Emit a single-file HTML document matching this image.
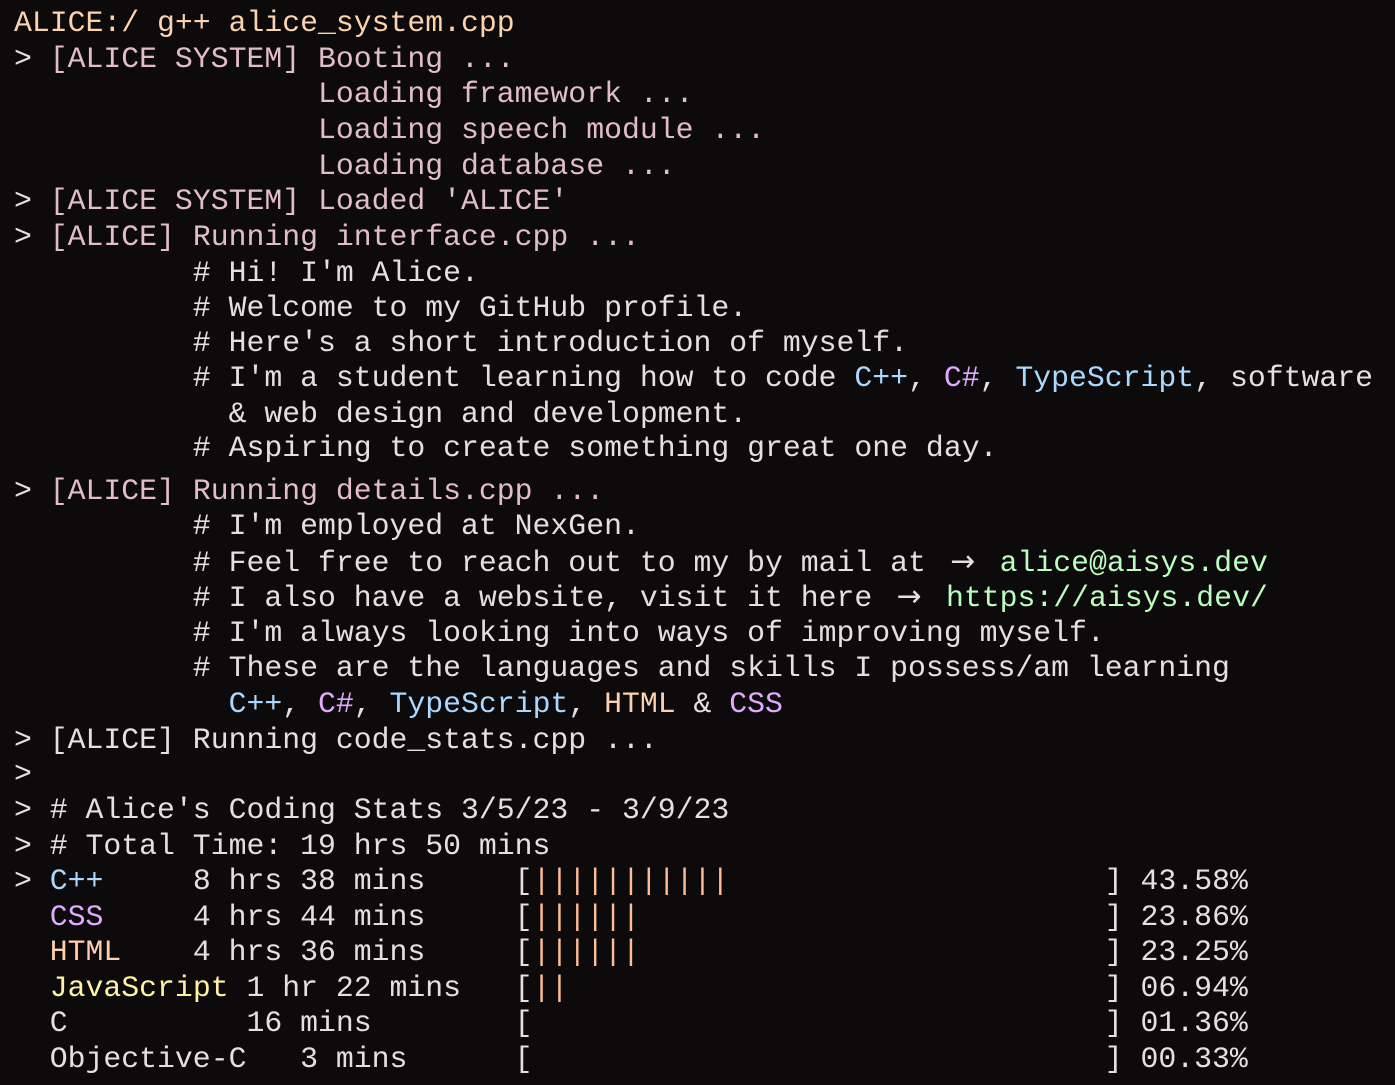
<!DOCTYPE html>
<html><head><meta charset="utf-8">
<style>
html,body{margin:0;padding:0;background:#0c0a0a;}
body{width:1395px;height:1085px;overflow:hidden;position:relative;}
.l{position:absolute;left:14px;height:36px;line-height:36px;white-space:pre;font-family:"Liberation Mono","DejaVu Sans Mono",monospace;font-size:29.8px;color:#e2e0e0;}
.pe{color:#fdd3ae}.pk{color:#e3bccb}.b{color:#a9d9ff}.pu{color:#e3a9ff}.g{color:#baffbd}.y{color:#fff2a2}.o{color:#ffbd95}.h{color:#ffcfae}
.ar{display:inline-block;width:2ch;text-align:center;font-family:"DejaVu Sans",sans-serif;}
</style></head><body>
<div class="l pe" style="top:5px">ALICE:/ g++ alice_system.cpp</div>
<div class="l" style="top:41px">&gt; <span class="pk">[ALICE SYSTEM] Booting ...</span></div>
<div class="l pk" style="top:76px">                 Loading framework ...</div>
<div class="l pk" style="top:112px">                 Loading speech module ...</div>
<div class="l pk" style="top:148px">                 Loading database ...</div>
<div class="l" style="top:183px">&gt; <span class="pk">[ALICE SYSTEM] Loaded 'ALICE'</span></div>
<div class="l" style="top:219px">&gt; <span class="pk">[ALICE] Running interface.cpp ...</span></div>
<div class="l" style="top:255px">          # Hi! I'm Alice.</div>
<div class="l" style="top:290px">          # Welcome to my GitHub profile.</div>
<div class="l" style="top:325px">          # Here's a short introduction of myself.</div>
<div class="l" style="top:360px">          # I'm a student learning how to code <span class="b">C++</span>, <span class="pu">C#</span>, <span class="b">TypeScript</span>, software</div>
<div class="l" style="top:396px">            &amp; web design and development.</div>
<div class="l" style="top:430px">          # Aspiring to create something great one day.</div>
<div class="l" style="top:473px">&gt; <span class="pk">[ALICE] Running details.cpp ...</span></div>
<div class="l" style="top:508px">          # I'm employed at NexGen.</div>
<div class="l" style="top:544px">          # Feel free to reach out to my by mail at <span class="ar">→</span> <span class="g">alice@aisys.dev</span></div>
<div class="l" style="top:579px">          # I also have a website, visit it here <span class="ar">→</span> <span class="g">https://aisys.dev/</span></div>
<div class="l" style="top:615px">          # I'm always looking into ways of improving myself.</div>
<div class="l" style="top:650px">          # These are the languages and skills I possess/am learning</div>
<div class="l" style="top:686px">            <span class="b">C++</span>, <span class="pu">C#</span>, <span class="b">TypeScript</span>, <span class="h">HTML</span> &amp; <span class="pu">CSS</span></div>
<div class="l" style="top:722px">&gt; [ALICE] Running code_stats.cpp ...</div>
<div class="l" style="top:756px">&gt;</div>
<div class="l" style="top:792px">&gt; # Alice's Coding Stats 3/5/23 - 3/9/23</div>
<div class="l" style="top:828px">&gt; # Total Time: 19 hrs 50 mins</div>
<div class="l" style="top:863px">&gt; <span class="b">C++</span>     8 hrs 38 mins     [<span class="o">|||||||||||</span>                     ] 43.58%</div>
<div class="l" style="top:899px">  <span class="pu">CSS</span>     4 hrs 44 mins     [<span class="o">||||||</span>                          ] 23.86%</div>
<div class="l" style="top:934px">  <span class="h">HTML</span>    4 hrs 36 mins     [<span class="o">||||||</span>                          ] 23.25%</div>
<div class="l" style="top:970px">  <span class="y">JavaScript</span> 1 hr 22 mins   [<span class="o">||</span>                              ] 06.94%</div>
<div class="l" style="top:1005px">  C          16 mins        [                                ] 01.36%</div>
<div class="l" style="top:1041px">  Objective-C   3 mins      [                                ] 00.33%</div>
</body></html>
